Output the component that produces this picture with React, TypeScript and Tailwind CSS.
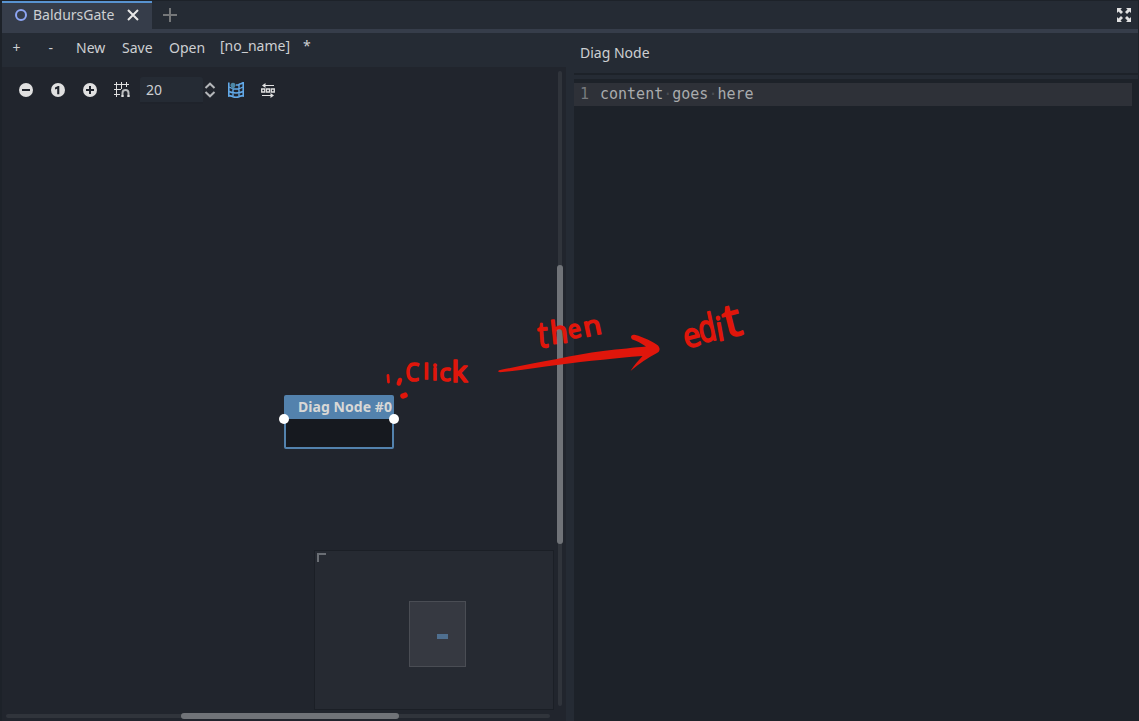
import React from "react";

const RED = "#e0160b";

function Letters({ text, marks }: { text: string; marks: [number, number, number, number, number][] }) {
  return (
    <g>
      {text.split("").map((ch, i) => {
        const [x, y, size, squeeze, angle] = marks[i];
        return (
          <text
            key={i}
            fontSize={size}
            fill={RED}
            stroke={RED}
            strokeWidth="1.700"
            strokeLinejoin="round"
            transform={`translate(${x} ${y}) rotate(${angle}) scale(${squeeze} 1)`}
          >
            {ch}
          </text>
        );
      })}
    </g>
  );
}

function Annotation() {
  return (
    <svg
      className="pointer-events-none absolute left-0 top-0 h-[721px] w-[1139px] font-['Open_Sans','Noto_Sans',sans-serif] font-medium"
      viewBox="0 0 1139 721"
    >
      <path
        d="M499 370.300 C520 366 540 362 557 359 C573 355.500 588 353 603 351 C620 349 635 347.500 646 346.500 C641 343 637 341 632.500 339.500 C629.500 337 631.500 333.500 635.500 335 C643 337 653 341.500 658 345.500 C660.500 348.500 660 351.500 657 353 C648 357.500 639 364 630.500 371 C634 365 639 360 642.500 356 C628 357 615 358.500 603 359.800 C588 361 573 363 557 365 C540 367 520 370.500 500 372.300 C498 372 498 371 499 370.300 Z"
        fill={RED}
      />
      <g stroke={RED} strokeLinecap="round" fill="none">
        <path d="M388 375.500 L388.500 382" strokeWidth="2.800" />
        <path d="M400 380 L398.800 383.500" strokeWidth="4.500" />
        <path d="M403 396 L405 395.200" strokeWidth="5.500" />
      </g>
      <Letters
        text="Click"
        marks={[
          [405.5, 381, 26, 0.84, 0],
          [423.5, 379, 22, 1, 0],
          [432, 380, 22, 1, 0],
          [439.5, 381, 24, 0.98, 0],
          [451.5, 382, 29, 1.05, 0],
        ]}
      />
      <Letters
        text="then"
        marks={[
          [538.5, 347.5, 36, 0.8, -4],
          [551.5, 344, 31, 0.92, -6],
          [569.5, 339, 25, 0.94, -12],
          [585, 337, 27, 1.1, -12],
        ]}
      />
      <Letters
        text="edit"
        marks={[
          [686, 348.5, 33, 0.93, -14],
          [701, 343, 38, 0.75, -12],
          [718, 341, 33, 0.9, -10],
          [727, 338, 46, 1.08, -14],
        ]}
      />
    </svg>
  );
}

function GraphTools() {
  return (
    <div className="flex h-[46px] items-center pl-[16px]">
      <svg className="h-4 w-4" viewBox="0 0 16 16">
        <circle cx="8" cy="8" r="7" fill="#e0e0e0" />
        <path d="M4 8h8" stroke="#21252d" strokeWidth="2" />
      </svg>
      <svg className="ml-4 h-4 w-4" viewBox="0 0 16 16">
        <circle cx="8" cy="8" r="7" fill="#e0e0e0" />
        <path d="M5 5.600 8 4h1.300v8.300H7.200V6.800L5 7.600z" fill="#21252d" />
      </svg>
      <svg className="ml-4 h-4 w-4" viewBox="0 0 16 16">
        <circle cx="8" cy="8" r="7" fill="#e0e0e0" />
        <path d="M4 8h8M8 4v8" stroke="#21252d" strokeWidth="2" />
      </svg>
      <svg className="ml-4 h-4 w-4" viewBox="0 0 16 16" fill="none" stroke="#e0e0e0">
        <path d="M2.500 0v15M7.500 0v7M12.500 0v5M0 2.500h15M0 7.500h7M0 12.500h6" />
        <path d="M8.500 15v-4a3 3 0 0 1 6 0v4" strokeWidth="2" stroke="#b9bbbd" />
        <path d="M7.500 14h2M13.500 14h2" strokeWidth="2" />
      </svg>
      <div className="ml-[10px] flex h-[27px] w-[63px] items-center rounded-t-[3px] border-b-2 border-[#1f232b] bg-[#252b34] pl-[6px] pt-px">
        20
      </div>
      <svg className="ml-px h-4 w-3" viewBox="0 0 12 16" fill="none" stroke="#b4b6b9" strokeWidth="2">
        <path d="M1.500 6 6 1.700 10.500 6M1.500 10 6 14.300 10.500 10" />
      </svg>
      <svg className="ml-[12px] h-4 w-4" viewBox="0 0 16 16" fill="none" stroke="#62a9e8">
        <path d="M.8 0.500v13.500q2.500-.5 4 .7 3.200 1 6.400 0 1.500-1.200 4-.7V.5q-2 1.500-4.500 1.700" strokeWidth="1.600" />
        <path d="M1 5q3 2 7 2t7-2M1 9.500q3 1.500 7 1.500t7-1.500M5 6v8.500M11 2v12.500M8 3h3" strokeWidth="1.400" />
        <path d="M2.500 3.200a2.500 2.500 0 0 1 5 0q0 2-2.500 4Q2.500 5.200 2.500 3.200" fill="#4c87a6" stroke="none" />
      </svg>
      <svg className="ml-4 h-4 w-4" viewBox="0 0 16 16" fill="none" stroke="#e0e0e0">
        <path d="M4 3.500h10M2 13.500h10" />
        <path d="M5.500 1 2 3.500 5.500 6zM10.500 11l3.500 2.500-3.500 2.500z" fill="#e0e0e0" stroke="none" />
        <path d="M1.700 7h3v3h-3zM6.500 7h3v3h-3zM11.300 7h3v3h-3z" strokeWidth="1.300" />
      </svg>
    </div>
  );
}

function DiagNode() {
  return (
    <div className="absolute left-[282px] top-[328px] h-[54px] w-[110px] rounded-[2px] border-2 border-[#5382ad] bg-[#16191f]">
      <div className="flex h-[22px] items-start justify-end whitespace-nowrap bg-[#5382ad] text-[14px] font-bold tracking-[0.05px] text-[#d8d8d6]">
        <span>Diag Node #0</span>
      </div>
      <div className="absolute -left-[7px] top-[17px] h-[10px] w-[10px] rounded-full bg-white" />
      <div className="absolute -right-[7px] top-[17px] h-[10px] w-[10px] rounded-full bg-white" />
    </div>
  );
}

function Minimap() {
  return (
    <div className="absolute left-[312px] top-[483px] h-[160px] w-[240px] border border-[#1b1f26] bg-[#262a32]">
      <svg className="absolute left-[2px] top-[2px] h-[9px] w-[9px]" viewBox="0 0 9 9">
        <path d="M1 9V1h8" fill="none" stroke="#6a6e74" strokeWidth="2" />
      </svg>
      <div className="absolute left-[94px] top-[50px] h-[66px] w-[57px] border border-[#4a4d54] bg-[#363941]">
        <div className="absolute left-[27px] top-[32px] h-[5px] w-[11px] bg-[#4f6f8f]" />
      </div>
    </div>
  );
}

export default function App() {
  return (
    <div className="relative flex h-[721px] w-[1139px] flex-col overflow-hidden bg-[#1d2229] pl-[2px] pr-px pt-px font-['Noto_Sans',sans-serif] text-[14px] leading-[20px] text-[#cdcfd2]">
      <div className="flex h-[28px] shrink-0 bg-[#252b34]">
        <div className="flex w-[150px] items-center border-t-2 border-[#5893d0] bg-[#363d4a] pb-[2px] pl-[13px]">
          <svg className="h-3 w-3" viewBox="0 0 12 12">
            <circle cx="6" cy="6" r="5" fill="none" stroke="#8da5f3" strokeWidth="2" />
          </svg>
          <span className="ml-[6px] w-[82px]">BaldursGate</span>
          <svg className="ml-[12px] h-3 w-3" viewBox="0 0 12 12">
            <path d="m1 1 10 10M11 1 1 11" stroke="#e8e8e8" strokeWidth="2" />
          </svg>
        </div>
        <svg className="ml-[11px] mt-[7px] h-[14px] w-[14px]" viewBox="0 0 14 14">
          <path d="M7 0v14M0 7h14" stroke="#757779" strokeWidth="2" />
        </svg>
        <div className="flex-1" />
        <svg className="mr-[7px] mt-[7px] h-[14px] w-[14px]" viewBox="0 0 14 14" fill="#e0e0e0">
          <path d="M0 0h5L3.500 1.500 6 4 4 6 1.500 3.500 0 5zM14 0v5l-1.500-1.500L10 6 8 4l2.500-2.500L9 0zM0 14V9l1.500 1.500L4 8l2 2-2.500 2.500L5 14zM14 14H9l1.500-1.500L8 10l2-2 2.500 2.500L14 9z" />
        </svg>
      </div>
      <div className="h-[4px] shrink-0 bg-[#363d4a]" />
      <div className="flex min-h-0 flex-1">
        <div className="flex w-[564px] flex-col">
          <div className="flex h-[34px] shrink-0 bg-[#252b34] pt-[5px]">
            <span className="ml-[10.5px] w-[36px]">+</span>
            <span className="w-[27.5px]">-</span>
            <span className="w-[46px]">New</span>
            <span className="w-[47px]">Save</span>
            <span className="w-[51px]">Open</span>
            <span className="-mt-[2px] w-[83px]">[no_name]</span>
            <span className="-mt-[2px]">*</span>
          </div>
          <div className="relative flex-1 bg-[#21252d]">
            <GraphTools />
            <DiagNode />
            <Minimap />
            <div className="absolute left-[556px] top-[4px] h-[635px] w-[4px] rounded-full bg-[#30343b]" />
            <div className="absolute left-[555px] top-[198px] h-[279px] w-[6px] rounded-full bg-[#707378]" />
            <div className="absolute left-[4px] top-[647px] h-[4px] w-[544px] rounded-full bg-[#30343b]" />
            <div className="absolute left-[179px] top-[646px] h-[6px] w-[218px] rounded-full bg-[#707378]" />
          </div>
        </div>
        <div className="w-[8px] bg-[#252b34]" />
        <div className="flex flex-1 flex-col">
          <div className="flex h-[40px] items-center bg-[#252b34] pl-[6px]">Diag Node</div>
          <div className="mt-[2px] h-[4px] bg-[#252b34]" />
          <div className="mr-[6px] mt-[4px] flex h-[23px] items-start whitespace-pre bg-[#2e3138] pl-[6px] pt-px font-['DejaVu_Sans_Mono',monospace] text-[15px] text-[#a9abad]">
            <span className="w-[20px] text-[#777a7e]">1</span>
            content<span className="text-[#4b4e54]">·</span>goes<span className="text-[#4b4e54]">·</span>here
          </div>
        </div>
      </div>
      <Annotation />
    </div>
  );
}
